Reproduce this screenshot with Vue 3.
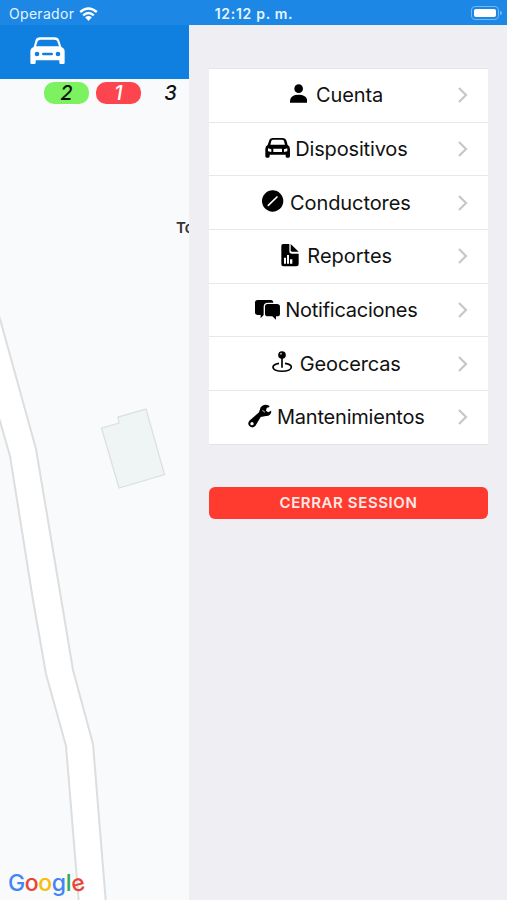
<script setup>
const items = [
  { id: 'account', label: 'Cuenta', view: '273 65 52 80', width: 17.3, gap: 9, tracking: -0.1 },
  { id: 'car', label: 'Dispositivos', view: '192 225 76 80', width: 25.3, gap: 4.5, tracking: -0.15 },
  { id: 'drivers', label: 'Conductores', view: '186 41 64 80', width: 21.3, gap: 6.5, tracking: -0.1 },
  { id: 'reports', label: 'Reportes', view: '245 202 54 80', width: 18, gap: 8.5, tracking: 0 },
  { id: 'messages', label: 'Notificaciones', view: '162 34 76 80', width: 25.3, gap: 4.5, tracking: -0.25 },
  { id: 'fences', label: 'Geocercas', view: '218 196 60 80', width: 20, gap: 7.5, tracking: -0.15 },
  { id: 'wrench', label: 'Mantenimientos', view: '141 41 72 80', width: 24, gap: 4.5, tracking: -0.2 },
]
</script>

<template>
  <div class="screen">
    <header class="status">
      <div class="carrier">
        <span>Operador</span>
        <svg class="wifi" viewBox="0 0 54 42">
          <g fill="none" stroke="#fff" stroke-width="7">
            <path d="M2 15Q27-6 52 15" />
            <path d="M11 25Q27 11 43 25" />
          </g>
          <path d="M17 31Q27 23 37 31L27 42Z" fill="#fff" />
        </svg>
      </div>
      <span class="clock">12:12 p. m.</span>
      <div class="battery"><i></i></div>
    </header>

    <div class="body">
      <main class="left">
        <div class="toolbar">
          <svg class="toolbar-car" viewBox="90 110 104 82">
            <path fill="#fff" fill-rule="evenodd" d="M106 121Q109 111 120 111H164Q175 111 178 121L184 140Q194 144 194 153V187Q194 191 190 191H182Q178 191 178 187V180H107V187Q107 191 103 191H95Q91 191 91 187V153Q91 144 101 140ZM113 123L108 138H177L172 123Q170 118 164 118H121Q115 118 113 123ZM111 154A7 7 0 1 0 111 168A7 7 0 1 0 111 154ZM174 154A7 7 0 1 0 174 168A7 7 0 1 0 174 154ZM130 157Q126 157 126 161Q126 165 130 165H155Q159 165 159 161Q159 157 155 157Z" />
          </svg>
        </div>
        <div class="map">
          <svg class="map-art" viewBox="0 79 189 821">
            <path class="road" d="M-6 300L0 319L36 449L61 598L73 670L93 744L106 904H79L66 746L46 674L33 600L10 456L0 421L-6 405Z" />
            <path class="house" d="M101.500 428L119 423L118 417L146 409L164.500 474.500L119 488Z" />
          </svg>
          <div class="counts">
            <span class="pill green">2</span>
            <span class="pill red">1</span>
            <span class="pill plain">3</span>
          </div>
          <span class="place">To</span>
          <div class="google"><b class="blue">G</b><b class="scarlet">o</b><b class="yellow">o</b><b class="blue">g</b><b class="leaf">l</b><b class="scarlet tilt">e</b></div>
        </div>
      </main>

      <aside class="drawer">
        <nav class="menu">
          <a v-for="item in items" :key="item.id" class="row">
            <span class="content">
              <svg class="icon" :viewBox="item.view" :style="{ width: item.width + 'px', marginRight: item.gap + 'px' }">
                <g v-if="item.id === 'account'">
                  <circle cx="299" cy="85" r="13" />
                  <path d="M273 127V121Q275 103 299 103Q323 103 325 121V127Z" />
                </g>
                <path v-else-if="item.id === 'car'" fill-rule="evenodd" d="M204 241Q206 231 216 231H244Q254 231 257 241L260 252Q267 255 267 264V286Q267 290 263 290H258Q254 290 254 286V281H206V286Q206 290 202 290H197Q193 290 193 286V264Q193 255 200 252ZM211 240L208 251H252L249 240Q248 236 243 236H217Q212 236 211 240ZM201 262V271L211 273V265ZM259 262L249 265V273L259 271ZM217 263V273H243V263Z" />
                <g v-else-if="item.id === 'drivers'">
                  <circle cx="218" cy="77" r="32" />
                  <path d="M205 90L231 65" stroke="#fff" stroke-width="5" stroke-linecap="round" />
                </g>
                <g v-else-if="item.id === 'reports'">
                  <path d="M251 205H270V226Q270 234 278 234H298V266Q298 272 291 272H252Q246 272 246 266V211Q246 205 251 205Z" />
                  <path d="M274 205L298 228H278Q274 228 274 224Z" />
                  <path d="M254 246H260V264H254ZM263 238H269V264H263ZM272 251H279V264H272Z" fill="#fff" />
                </g>
                <g v-else-if="item.id === 'messages'">
                  <path d="M170 43H209Q217 43 217 51H201Q188 51 188 63V88L179 98V88H171Q162 88 162 80V51Q162 43 170 43Z" />
                  <path d="M200 55H228Q237 55 237 63V84Q237 92 229 92H225V102L214 92H201Q192 92 192 84V63Q192 55 200 55Z" />
                </g>
                <g v-else-if="item.id === 'fences'">
                  <circle cx="248" cy="211" r="11.500" />
                  <circle cx="245" cy="207" r="3" fill="#aaa" />
                  <path d="M248 220V249" stroke="#000" stroke-width="5" />
                  <path d="M239 236Q221 239 221 247C221 264 276 264 276 247Q276 239 257 236" fill="none" stroke="#000" stroke-width="5" />
                </g>
                <g v-else>
                  <path fill-rule="evenodd" d="M205 46Q187 38 179 51L174 66L145 91Q138 100 146 108Q154 115 163 107L179 80L195 77Q207 78 211 65L210 61L202 66L195 61L197 53L205 50ZM153 95A5 5 0 1 1 153 105A5 5 0 1 1 153 95Z" />
                  <path d="M184 60L192 66" stroke="#888" stroke-width="4" />
                </g>
              </svg>
              <span class="label" :style="{ letterSpacing: item.tracking + 'px' }">{{ item.label }}</span>
            </span>
            <svg class="chevron" viewBox="0 0 11 16"><path d="M2 1L9 8L2 15" /></svg>
          </a>
        </nav>
        <button class="logout">CERRAR SESSION</button>
      </aside>
    </div>
  </div>
</template>

<style>
body { margin: 0; }
</style>

<style scoped>
.screen {
  width: 507px;
  height: 900px;
  display: flex;
  flex-direction: column;
  overflow: hidden;
  font-family: Inter, "Liberation Sans", sans-serif;
  background: #efeef3;
}
.status {
  height: 25px;
  flex: none;
  box-sizing: border-box;
  padding: 2px 8px 0 9px;
  display: grid;
  grid-template-columns: 1fr auto 1fr;
  align-items: center;
  background: #1c87e5;
  color: #e6f5ff;
  font-size: 14px;
}
.carrier { display: flex; align-items: center; gap: 5px; letter-spacing: 0.3px; }
.wifi { width: 19px; height: 14px; }
.clock { font-weight: 600; letter-spacing: 0.7px; }
.battery {
  justify-self: end;
  position: relative;
  box-sizing: border-box;
  width: 28px;
  height: 14px;
  margin-top: -1px;
  padding: 2px;
  border: 1px solid #72b8f1;
  border-radius: 4px;
}
.battery i { display: block; height: 8px; border-radius: 2px; background: #fff; }
.battery::after {
  content: "";
  position: absolute;
  right: -4px;
  top: 4px;
  width: 2px;
  height: 4px;
  border-radius: 0 2px 2px 0;
  background: #72b8f1;
}
.body { flex: 1; display: flex; min-height: 0; }
.left { width: 189px; flex: none; display: flex; flex-direction: column; overflow: hidden; }
.toolbar { height: 54px; flex: none; box-sizing: border-box; padding: 12px 30px 0; background: #0f80e0; }
.toolbar-car { display: block; width: 34.700px; height: 27.300px; }
.map { flex: 1; position: relative; overflow: hidden; background: #f8fafb; }
.map-art { display: block; width: 189px; height: 821px; }
.road { fill: #fff; stroke: #dcdedf; stroke-width: 2; }
.house { fill: #eff5f5; stroke: #dde0e1; stroke-width: 1.3; }
.counts { position: absolute; left: 44px; top: 3px; display: flex; gap: 7px; }
.pill {
  width: 45px;
  height: 22px;
  border-radius: 10px;
  line-height: 23px;
  text-align: center;
  font-size: 20px;
  font-weight: 500;
  font-style: italic;
  color: #111;
}
.green { background: #7cf261; }
.red { background: #fc454f; color: #fff; }
.place { position: absolute; left: 176px; top: 139px; font-size: 15px; line-height: 20px; font-weight: 600; color: #333; }
.google { position: absolute; left: 8px; top: 788px; display: flex; font-size: 23px; line-height: 32px; letter-spacing: -0.4px; }
.google b { font-weight: 500; }
.blue { color: #4285f4; }
.scarlet { color: #ea4335; }
.yellow { color: #fbbc05; }
.leaf { color: #34a853; }
.tilt { transform: rotate(-15deg); }
.drawer { flex: 1; padding: 43px 19px 0 20px; background: #efeef3; }
.menu { display: flex; flex-direction: column; border-top: 1px solid #e6e6ea; border-bottom: 1px solid #e3e3e6; background: #fff; }
.row {
  height: 53.700px;
  box-sizing: border-box;
  padding: 0 20px 0 7px;
  display: flex;
  align-items: center;
  border-bottom: 1px solid #e8e8eb;
}
.row:last-child { border-bottom: 0; height: 52.700px; }
.content { flex: 1; display: flex; align-items: center; justify-content: center; }
.icon { height: 26.670px; flex: none; }
.label { font-size: 20px; line-height: 26px; color: #111; white-space: nowrap; }
.chevron { width: 11px; height: 16px; }
.chevron path { fill: none; stroke: #c7c7cb; stroke-width: 2.2; }
.logout {
  display: block;
  width: 100%;
  height: 32px;
  margin-top: 42px;
  padding: 0;
  border: 0;
  border-radius: 6px;
  background: #ff3b30;
  color: #ffe9e7;
  font: 600 15px/32px Inter, "Liberation Sans", sans-serif;
  letter-spacing: 0.6px;
}
</style>
